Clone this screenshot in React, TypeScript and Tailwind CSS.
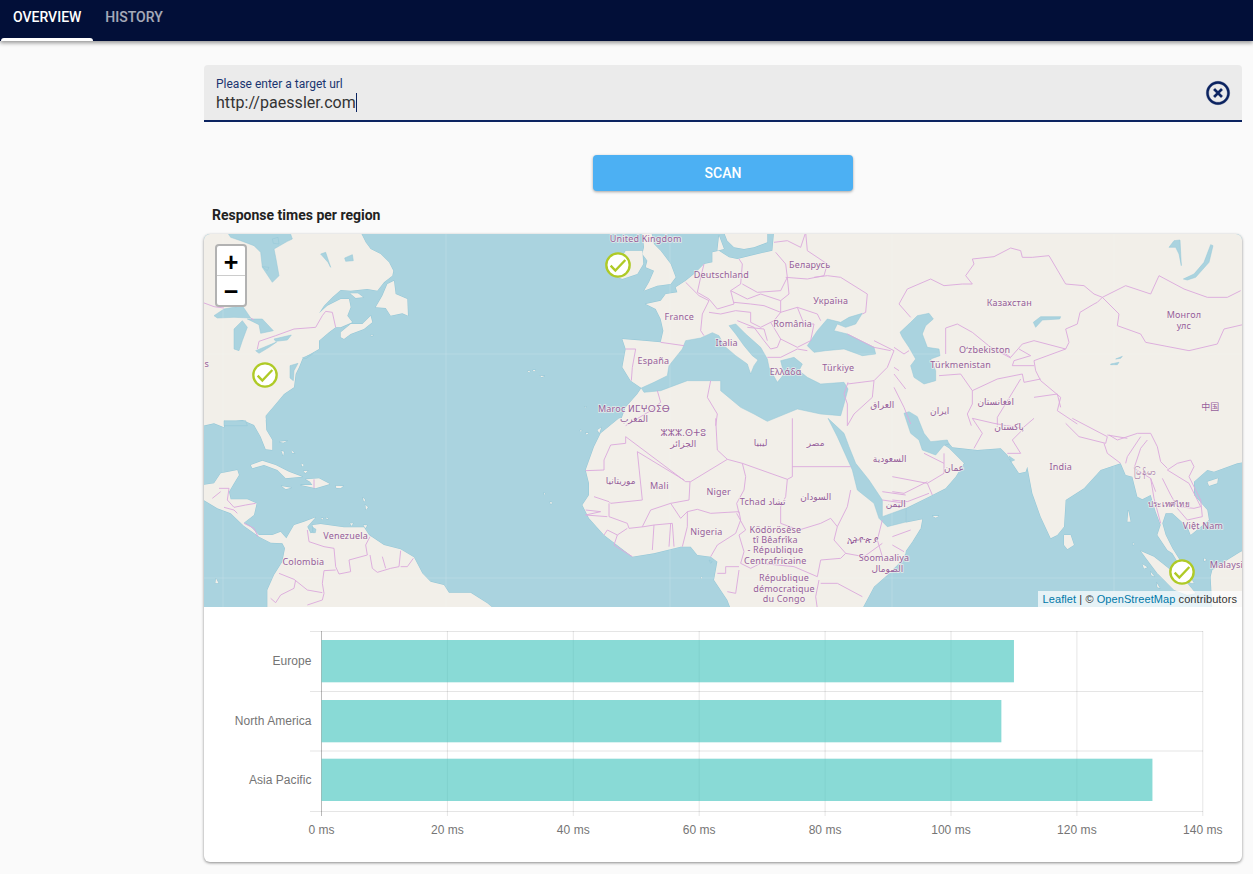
import React from "react";

type Label = [number, number, string, number?];
type Tile = { dx: number; dy: number; land: string[]; water: string[]; borders: string[]; labels: Label[] };

const tiles: Tile[] = [
  {
    dx: 0, dy: 0,
    land: [
      "-5,-5 470,-5 485,25 500,45 530,60 555,85 568,110 565,125 540,145 520,170 490,165 440,170 410,168 385,190 360,215 345,238 370,215 410,195 435,195 440,220 430,245 445,265 410,280 395,280 375,295 345,320 345,345 310,365 295,375 285,400 275,420 270,460 240,480 215,510 185,545 185,558 -5,558",
      "515,220 535,185 550,150 570,140 575,180 610,195 612,245 595,238 560,245 545,222",
      "410,295 440,270 475,270 500,245 505,265 480,285 440,300 420,315 410,310",
      "438,178 462,178 478,190 455,192",
      "970,412 978,410 976,416", "986,408 995,408 990,413", "1008,425 1022,426 1012,430",
      "498,304 508,304 504,307",
    ],
    water: [
      "70,-5 80,10 110,20 150,35 170,55 175,100 205,145 225,125 215,70 210,45 250,22 265,15 258,-5",
      "30,245 60,225 115,215 140,252 90,250 40,252",
      "90,285 115,260 130,280 115,320 105,350 90,345",
      "130,255 175,255 208,290 170,298 165,272",
      "155,350 218,324 195,340 165,358",
      "210,315 262,303 250,318 215,322",
      "295,372 328,358 306,374",
      "350,60 365,55 380,100 372,85",
      "422,72 445,62 448,80 425,82",
      "205,15 222,10 225,30 208,28",
      "175,98 195,100 190,110",
      "258,395 282,388 270,410 268,440 258,432",
      "60,560 125,560 130,575 60,575",
    ],
    borders: [
      "-5,205 30,218 60,222", "140,252 150,258",
      "160,345 165,322 215,305 270,285 335,280 355,245 365,232 385,235 395,280",
    ],
    labels: [[8, 388, "s"]],
  },
  {
    dx: 1050, dy: 0,
    land: [
      "195,575 200,560 215,520 250,480 262,462 230,440 205,400 215,345 205,315 270,320 320,325 328,290 320,255 305,225 275,210 320,200 335,180 370,175 365,160 395,140 420,120 450,90 475,85 475,55 495,50 525,70 550,75 590,65 655,50 660,-5 1055,-5 1055,575",
      "270,40 265,-5 292,-5 300,30 320,50 350,90 365,130 350,150 310,155 270,170 285,145 300,110 275,100 280,80 265,60",
      "215,50 265,50 268,90 250,120 205,135 180,125 190,90",
      "495,5 510,45 490,50",
      "510,-5 640,-5 640,25 600,40 570,45 540,40 520,20",
      "92,518 97,518 95,521",
    ],
    water: [
      "262,462 300,445 340,425 345,395 385,345 395,320 440,312 475,296 495,305 510,335 545,365 580,390 590,420 600,395 612,378 595,365 570,335 545,300 525,275 545,270 575,300 620,340 640,375 645,400 670,445 690,420 680,380 720,370 745,390 735,410 760,430 800,450 870,445 882,465 870,510 860,545 800,540 730,525 640,562 600,540 560,520 500,470 500,440 470,440 400,440 320,470 270,475",
      "760,335 790,290 820,255 860,265 885,250 925,238 905,270 875,280 850,270 840,290 880,300 960,340 965,360 925,365 870,345 815,350 780,355",
    ],
    borders: [
      "395,145 435,185 465,200 445,240 440,290 450,305", "320,325 390,335", "215,345 245,345 235,400 232,440",
      "450,90 440,130 430,175 465,195 490,225 540,210 530,170 560,150 565,90 555,75",
      "465,235 500,240 545,230 590,235 590,265 620,280 660,260 680,235 630,215 590,210 540,205",
      "530,170 580,195 620,180 680,200", "565,150 610,175 680,170 700,130 695,90 665,55",
      "695,130 760,135 810,125 820,90 760,50 755,-5", "700,130 705,180 680,200 680,235 730,220 790,240 800,260",
      "780,130 820,125 860,130 940,180 935,235 925,240", "660,25 700,20 740,40 755,-5",
      "730,220 750,270 780,270 770,320 730,340 680,315", "550,260 600,280 630,320 650,345 670,340 680,315 650,265",
      "580,280 630,285 640,320", "640,370 680,370 730,345 760,350", "880,450 960,440 1000,400 1020,350 960,320",
      "882,445 870,480 880,510 880,575", "960,440 955,490 900,540 880,575", "1020,420 1055,465",
      "310,470 320,505 290,530 215,575", "470,440 460,490 490,540 485,575", "880,300 960,340 1010,350",
    ],
    labels: [
      [275, 12, "United Kingdom"], [502, 122, "Deutschland"], [767, 90, "Беларусь"], [830, 200, "Україна"],
      [376, 246, "France"], [716, 268, "România"], [518, 325, "Italia"], [298, 378, "España"], [695, 412, "Ελλάδα"],
      [853, 400, "Türkiye"], [985, 510, "العراق"], [240, 522, "Maroc ⵍⵎⵖⵔⵉⴱ"], [240, 553, "المغرب"],
    ],
  },
  {
    dx: 2070, dy: 0,
    land: ["-5,-5 1055,-5 1055,575 -5,575"],
    water: [
      "18,295 50,265 70,245 105,238 118,255 95,275 85,300 100,340 135,345 138,365 110,375 125,410 125,440 90,450 60,430 50,395 65,375 45,340 25,310",
      "418,265 440,248 500,248 497,255 445,258 425,280",
      "868,135 900,120 930,85 950,32 957,35 945,85 905,130 880,138",
      "650,390 675,385 670,392 650,392", "665,375 685,367 680,373",
      "825,40 840,20 858,18 862,95 855,60 845,40",
    ],
    borders: [
      "50,250 15,210 40,165 110,135 150,155 205,150 235,150 215,125 240,90 235,75 300,68 350,42 380,50 385,70 415,70 465,65 515,150 570,155 600,180 625,190 610,205 600,210 558,235 550,270 515,285 525,325 515,345 420,320 385,330 350,370 320,350",
      "155,360 155,282 190,270 235,295 290,340 350,372",
      "625,190 695,155 770,180 795,125 870,165 940,190 1000,190 1040,170",
      "625,190 675,240 670,275 740,300 755,325 885,350 970,330 990,285 1055,270",
      "515,345 420,380 425,410 440,440 500,490 490,530 550,570",
      "375,345 410,365 360,380 355,395 420,395", "135,425 200,420 235,470 310,435 385,420 390,445 440,435",
      "235,470 235,510 220,540 232,575", "380,435 310,550 310,575", "420,490 490,480 500,520", "0,340 30,360 45,350", "0,400 15,410", "0,460 30,520 50,570",
    ],
    labels: [
      [346, 205, "Казахстан"], [272, 347, "Oʻzbekiston"], [200, 392, "Türkmenistan"], [870, 241, "Монгол"], [870, 273, "улс"],
      [137, 530, "ایران"], [305, 502, "افغانستان"], [949, 518, "中国"],
    ],
  },
  {
    dx: 0, dy: 558,
    land: [
      "-5,-5 185,-5 187,30 205,60 205,90 185,88 170,50 150,15 115,0 100,2 60,10 60,22 30,10 -5,18",
      "-5,195 30,190 50,160 100,150 105,165 90,190 75,215 80,238 130,238 158,250 150,285 120,308 140,320 165,345 205,345 230,335 247,355 270,315 300,305 335,292 310,320 320,340 332,335 325,315 350,312 420,322 480,322 495,345 540,375 590,388 630,412 655,460 680,485 720,495 735,518 800,518 850,550 870,566 190,566 190,510 210,465 235,425 243,385 235,370 200,368 165,350 120,318 80,280 40,265 -5,238",
      "140,135 175,122 215,135 255,155 295,170 245,175 220,150 180,135 145,145",
      "305,178 345,175 378,192 335,205 290,195 325,195 318,185",
      "232,198 262,203 245,208", "395,197 418,198 410,205 397,204",
      "225,65 250,62 238,68", "232,92 240,95 238,108", "262,90 272,100 264,98", "292,130 300,135 294,140", "298,153 312,152 304,160",
      "476,232 484,240 480,246", "484,254 492,262 486,270", "36,475 44,490 34,490", "1020,218 1024,222 1020,224", "1038,245 1046,248 1040,253",
      "438,310 448,310 442,318", "478,315 490,316 484,325", "352,294 358,294 354,300", "366,292 374,296 368,298",
    ],
    water: ["326,322 336,328 334,338 326,338"],
    borders: [
      "45,205 75,205 70,240 90,262 125,255 155,250", "25,235 50,215", "60,262 90,270 100,280", "120,310 150,325 162,350",
      "310,330 315,365 360,380 390,385 395,440 405,462 440,455 435,420 490,405 485,375 498,350",
      "395,450 360,452 355,490 360,520 355,540 310,555", "498,405 505,445 520,457 560,445 585,440 590,392", "535,410 545,445",
      "590,440 610,440 628,415", "225,460 270,478 310,510 355,518", "275,480 270,505 230,525 215,548 200,535", "330,178 330,205",
    ],
    labels: [[425, 347, "Venezuela"], [298, 424, "Colombia"]],
  },
  {
    dx: 1050, dy: 558,
    land: [
      "195,-5 140,40 120,80 95,150 105,190 105,225 85,255 105,295 150,345 235,410 300,400 380,380 410,380 430,405 470,410 490,425 480,480 520,540 530,566 925,566 960,500 1000,465 1040,425 1055,400 1055,-5",
      "78,30 84,32 80,36", "95,38 104,40 98,44", "130,30 142,22 136,40", "440,472 446,472 442,476",
    ],
    water: [
      "822,-5 870,40 885,80 905,130 945,180 985,240 985,290 1055,265 1055,306 1000,320 975,295 960,250 910,210 895,150 850,50",
      "465,420 475,425 470,430",
    ],
    borders: [
      "215,50 215,70 170,75 150,120 150,150 95,152", "215,50 395,185 410,185 520,118 565,130 575,170 570,210 548,250 555,280",
      "250,95 265,240 170,250 165,245 120,230", "250,95 390,180", "408,185 405,240 350,250 290,270 265,320",
      "350,250 380,295 400,275 430,268 470,280 555,275 560,300 545,340 490,375 470,410", "400,275 400,320 385,380",
      "165,250 165,290 220,310 225,325 270,320 300,315 355,310 360,380", "300,315 295,390", "350,310 345,380",
      "220,325 190,345 180,375 235,410", "150,345 160,330 190,345", "95,270 140,275 95,285 160,290",
      "485,-5 490,90 520,118", "565,130 700,178", "700,178 715,170 715,-5", "715,140 890,140",
      "700,178 695,230 680,260 680,310 735,330 800,310 830,295 850,320 840,360 875,400 930,410 985,370",
      "890,210 880,260 850,320", "548,280 575,330 555,345 570,395 560,430 590,445 620,430 720,440 790,470 800,420 860,415",
      "795,480 785,530 790,566", "800,490 850,490 925,530", "860,415 875,400", "985,410 970,360 985,300",
      "555,440 515,440 515,460 490,460", "520,515 545,520 555,450", "985,215 1055,225", "985,240 1055,250",
    ],
    labels: [
      [388, 37, "ⵣⵣⵣ.ⵙⵜⵓ"], [388, 70, "الجزائر"], [620, 67, "ليبيا"], [785, 67, "مصر"], [1007, 115, "السعودية"], [200, 182, "موريتانيا"],
      [316, 195, "Mali"], [494, 213, "Niger"], [626, 243, "Tchad تشاد"], [785, 228, "السودان"], [1025, 250, "اليمن"], [457, 335, "Nigeria"],
      [664, 327, "Ködörösêse"], [664, 358, "tî Bêafrîka"], [664, 389, "- République"], [664, 420, "Centrafricaine"],
      [690, 473, "République"], [690, 504, "démocratique"], [690, 535, "du Congo"], [925, 358, "ኢትዮጵያ"], [990, 413, "Soomaaliya"], [1000, 445, "الصومال"],
    ],
  },
  {
    dx: 2070, dy: 558,
    land: [
      "-5,-20 1055,-20 1055,125 1030,130 960,155 940,150 900,185 900,225 940,270 945,300 890,345 880,320 835,280 815,280 805,310 815,345 835,385 870,440 900,490 890,490 835,400 820,390 790,345 800,315 785,275 770,225 745,238 730,230 715,170 695,165 680,130 620,150 570,205 515,240 510,320 490,345 470,355 440,290 415,220 400,140 395,155 375,160 355,130 340,105 320,85 250,90 175,82 165,70 150,75 165,85 210,130 185,170 155,205 105,230 35,265 -5,275",
      "-5,316 85,298 80,325 55,365 20,415 -5,445",
      "510,345 530,345 540,375 520,388 510,375",
      "740,393 780,410 830,450 880,490 905,520 880,525 840,510 790,460",
      "955,450 1000,420 1040,395 1055,390 1055,570 955,570 950,470",
      "940,185 972,175 970,190 945,198", "115,288 135,288 125,293", "703,270 710,305 700,305", "745,432 760,442 750,446", "770,455 782,470 772,466", "788,488 798,505 790,502", "718,368 722,372 718,376", "930,415 938,420 930,424",
    ],
    water: ["30,-20 45,-25 70,-10 90,40 110,65 160,60 165,72 150,75 125,105 85,90 75,60 50,40", "345,108 362,120 350,125"],
    borders: [
      "235,-5 265,40 240,85", "235,-5 300,10 385,25 420,-5", "385,30 355,60 380,100 340,100",
      "515,10 555,50 635,70 640,50 535,-5", "640,45 700,55", "630,70 640,100 680,130",
      "645,45 670,60 730,40 770,40 790,80 800,125 820,145", "695,130 700,110 740,50", "760,60 740,85 720,145 770,175 785,215",
      "770,175 780,235 800,310", "805,175 830,225 850,260 900,265 920,260 885,190 820,150", "820,150 850,130 890,120 900,140 885,170 920,240 925,290",
      "850,265 880,300 925,290", "-5,170 100,190 115,225", "100,190 150,160 150,100", "90,100 150,130", "-5,215 30,220 100,185",
      "-5,240 40,245 105,220", "-5,350 50,330", "-5,375 30,395",
    ],
    labels: [
      [345, 18, "پاکستان"], [500, 138, "India"], [752, 155, "မြန်မာ"], [825, 250, "ประเทศไทย", 24], [927, 317, "Việt Nam"], [1005, 433, "Malaysia"], [180, 142, "عمان"],
    ],
  },
];

const markers: [number, number][] = [[183, 423], [1242, 93], [2934, 1014]];

function MapDrawing() {
  const land = "#f2efe9";
  const water = "#aad3df";
  return (
    <svg viewBox="0 0 3114 1119" width="1038" height="373" className="block">
      <rect width="3114" height="1119" fill={water} />
      {tiles.map((t, i) => (
        <g key={i} transform={`translate(${t.dx} ${t.dy})`}>
          {t.land.map((p, j) => (
            <polygon key={j} points={p} fill="#93c6d6" stroke="#93c6d6" strokeWidth="3" />
          ))}
        </g>
      ))}
      {tiles.map((t, i) => (
        <g key={i} transform={`translate(${t.dx} ${t.dy})`}>
          {t.land.map((p, j) => (
            <polygon key={j} points={p} fill={land} />
          ))}
        </g>
      ))}
      {tiles.map((t, i) => (
        <g key={i} transform={`translate(${t.dx} ${t.dy})`}>
          {t.water.map((p, j) => (
            <polygon key={j} points={p} fill={water} stroke="#93c6d6" strokeWidth="1.5" />
          ))}
        </g>
      ))}
      {[57, 726, 1398, 2064, 2730].map((x) => (
        <line key={x} x1={x} x2={x} y1="0" y2="1119" stroke="#ffffff" strokeOpacity="0.14" strokeWidth="3" />
      ))}
      {[360, 1032].map((y) => (
        <line key={y} x1="0" x2="3114" y1={y} y2={y} stroke="#ffffff" strokeOpacity="0.14" strokeWidth="3" />
      ))}
      {tiles.map((t, i) => (
        <g key={i} transform={`translate(${t.dx} ${t.dy})`}>
          {t.borders.map((p, j) => (
            <polyline key={j} points={p} fill="none" stroke="#dcaadd" strokeWidth="2.8" strokeLinejoin="round" />
          ))}
        </g>
      ))}
      <g
        fontFamily="'Noto Sans','DejaVu Sans','Noto Sans CJK SC',sans-serif"
        fontSize="27"
        fill="#95609b"
        stroke="#f6f3ee"
        strokeOpacity="0.75"
        strokeWidth="5"
        paintOrder="stroke"
        textAnchor="middle"
        dominantBaseline="central"
        letterSpacing="0.6"
      >
        {tiles.map((t, i) => (
          <g key={i} transform={`translate(${t.dx} ${t.dy})`}>
            {t.labels.map(([x, y, s, size], j) => (
              <text key={j} x={x} y={y} fontSize={size}>{s}</text>
            ))}
          </g>
        ))}
      </g>
      {markers.map(([x, y]) => (
        <g key={x} transform={`translate(${x} ${y})`}>
          <circle r="35" fill="#ffffff" stroke="#afca26" strokeWidth="7" />
          <polyline points="-22,2 -8,17 22,-15" fill="none" stroke="#afca26" strokeWidth="7" />
        </g>
      ))}
    </svg>
  );
}

const xTicks = [0, 20, 40, 60, 80, 100, 120, 140];
const bars = [
  { name: "Europe", value: 110, top: 9 },
  { name: "North America", value: 108, top: 69 },
  { name: "Asia Pacific", value: 132, top: 127.7 },
];

function BarChart() {
  const x0 = 117.5;
  const step = 125.9;
  const yLines = [24.5, 84.5, 144, 204.5];
  return (
    <svg viewBox="0 0 1038 255" width="1038" height="255" className="block">
      {yLines.map((y) => (
        <line key={y} x1="106" x2="999" y1={y} y2={y} stroke="#000000" strokeOpacity="0.1" />
      ))}
      {xTicks.map((t, i) => (
        <line
          key={t}
          x1={x0 + i * step}
          x2={x0 + i * step}
          y1="24"
          y2="209"
          stroke="#000000"
          strokeOpacity={i === 0 ? 0.27 : 0.1}
        />
      ))}
      {bars.map((b) => (
        <rect
          key={b.name}
          x={x0}
          y={b.top + 24}
          width={(b.value / 20) * step}
          height="42.3"
          fill="#4cc7c1"
          fillOpacity="0.66"
        />
      ))}
      <g fontFamily="'Liberation Sans',Arial,sans-serif" fontSize="12" fill="#757575" letterSpacing="0.05">
        {bars.map((b, i) => (
          <text key={b.name} x="107.5" y={[58, 118, 177][i]} textAnchor="end">
            {b.name}
          </text>
        ))}
        {xTicks.map((t, i) => (
          <text key={t} x={x0 + i * step} y="227" textAnchor="middle">
            {t} ms
          </text>
        ))}
      </g>
    </svg>
  );
}

export default function App() {
  return (
    <div className="min-h-screen bg-[#fafafa] font-['Roboto',sans-serif]">
      <nav className="flex h-[41px] bg-[#020f38] pl-px shadow-[0_2px_4px_rgba(0,0,0,0.4)]">
        <div className="relative px-3 pt-[9px] text-sm leading-4 font-medium text-white">
          OVERVIEW
          <div className="absolute right-0 bottom-0 left-0 h-[3px] rounded-t-[3px] bg-white" />
        </div>
        <div className="px-3 pt-[9px] text-sm leading-4 font-medium text-white/65">HISTORY</div>
      </nav>

      <main className="pt-6 pr-[11px] pb-3 pl-[204px]">
        <div className="relative h-[57px] rounded-t border-b-2 border-[#0b2360] bg-[#ebebeb] px-3 pt-[12px]">
          <div className="text-xs leading-[14px] text-[#1a3570]">Please enter a target url</div>
          <div className="mt-[2px] flex h-[19px] items-center text-base leading-[19px] tracking-[0.05px] text-[#333333]">
            <span>http://paessler.com</span>
            <span className="h-[19px] w-px bg-[#0b2360]" />
          </div>
          <svg viewBox="0 0 24 24" width="28" height="28" fill="#0b2360" stroke="#0b2360" strokeWidth="0.3" className="absolute top-[14px] right-[10px]">
            <path d="M14.59 8L12 10.59 9.41 8 8 9.41 10.59 12 8 14.59 9.41 16 12 13.41 14.59 16 16 14.59 13.41 12 16 9.41 14.59 8zM12 2C6.47 2 2 6.47 2 12s4.47 10 10 10 10-4.47 10-10S17.53 2 12 2zm0 18c-4.41 0-8-3.59-8-8s3.59-8 8-8 8 3.59 8 8-3.59 8-8 8z" />
          </svg>
        </div>

        <div className="mt-[33px] flex justify-center">
          <button className="h-9 w-[260px] rounded-sm bg-[#4cb0f3] text-sm font-medium text-white shadow-[0_1px_3px_rgba(0,0,0,0.35)]">
            SCAN
          </button>
        </div>

        <h2 className="mt-[14px] mb-[9px] pl-2 text-sm leading-5 font-bold text-[#222222]">Response times per region</h2>

        <section className="overflow-hidden rounded-md bg-white shadow-[0_1px_3px_rgba(0,0,0,0.45)]">
          <div className="relative h-[373px]">
            <MapDrawing />
            <div className="absolute top-[10px] left-[11px] w-[32px] overflow-hidden rounded border-2 border-black/30 bg-white font-['Liberation_Sans',sans-serif] text-black">
              <div className="flex h-[30px] items-center justify-center border-b border-[#cccccc] pt-[3px] text-[25px] leading-none font-bold">+</div>
              <div className="flex h-[29px] items-center justify-center pt-[1px] text-[25px] leading-none font-bold">−</div>
            </div>
            <div className="absolute right-0 bottom-0 h-[16px] bg-white/70 px-[5px] font-['Liberation_Sans',sans-serif] text-[11px] leading-[16px] tracking-[0.08px] text-[#333333]">
              <span className="text-[#0078a8]">Leaflet</span> | © <span className="text-[#0078a8]">OpenStreetMap</span> contributors
            </div>
          </div>
          <BarChart />
        </section>
      </main>
    </div>
  );
}
